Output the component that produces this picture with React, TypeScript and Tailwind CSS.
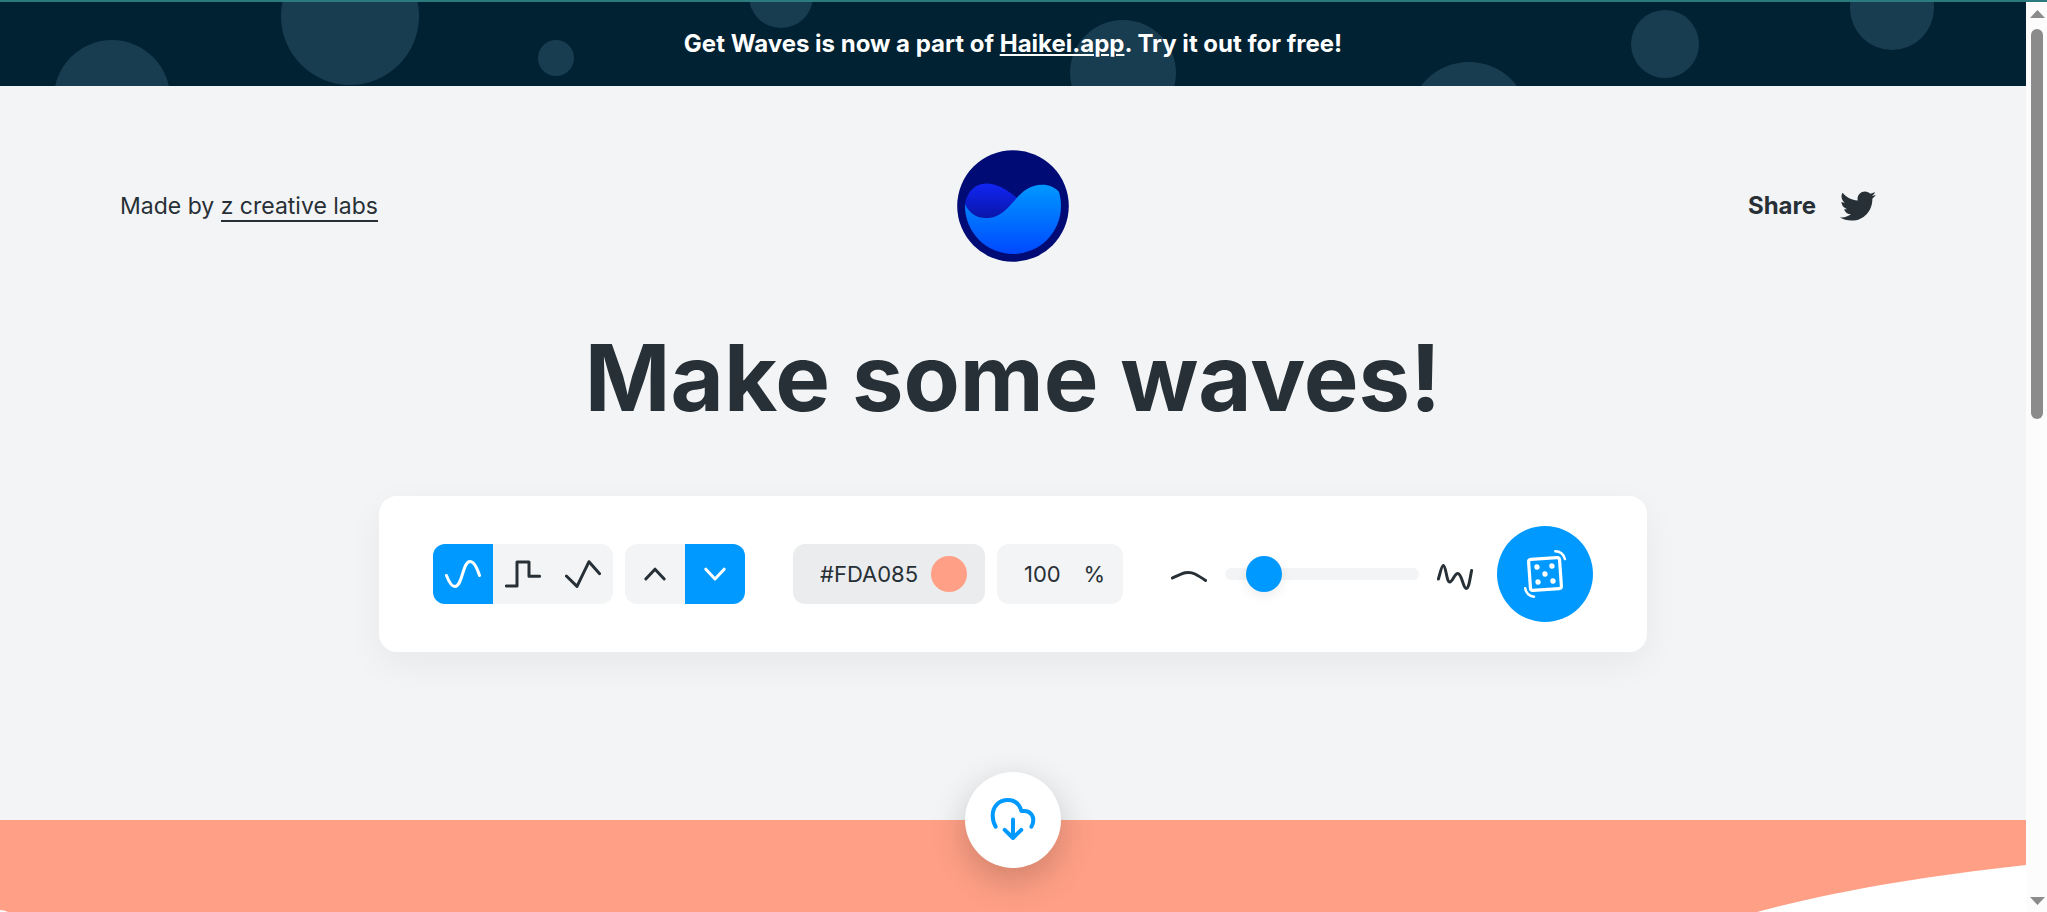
import { useState } from "react";
import type { ReactNode } from "react";
import { FaTwitter } from "react-icons/fa";

type WaveShape = "sine" | "step" | "peak";
type Direction = "up" | "down";

const bubbles = [
  { cx: 112, cy: 98, r: 58 },
  { cx: 350, cy: 16, r: 69 },
  { cx: 556, cy: 58, r: 18 },
  { cx: 781, cy: -4, r: 32 },
  { cx: 1123, cy: 73, r: 53 },
  { cx: 1469, cy: 122, r: 60 },
  { cx: 1665, cy: 44, r: 34 },
  { cx: 1892, cy: 8, r: 42 },
];

const shapes: { id: WaveShape; label: string; path: string }[] = [
  {
    id: "sine",
    label: "Smooth wave",
    path: "M1.5 19.5C4.5 27.5 7 30.5 10 30.5C17.5 30.5 17.5 5.5 25 5.5C28.5 5.5 31.5 10 34.5 19.5",
  },
  { id: "step", label: "Stepped wave", path: "M1.4 30H12V6H24V20.3H34.6" },
  { id: "peak", label: "Peaked wave", path: "M1.4 20L12 30.4L24 5.7L34.6 17.7" },
];

const directions: { id: Direction; label: string; path: string }[] = [
  { id: "up", label: "Wave on top", path: "M8.8 23L18 13.2L27.2 23" },
  { id: "down", label: "Wave at bottom", path: "M8.8 13.2L18 23L27.2 13.2" },
];

function StrokeIcon({ path }: { path: string }) {
  return (
    <svg
      viewBox="0 0 36 36"
      className="h-9 w-9 shrink-0"
      fill="none"
      stroke="currentColor"
      strokeWidth="3"
      strokeLinecap="round"
      strokeLinejoin="round"
      aria-hidden="true"
    >
      <path d={path} />
    </svg>
  );
}

function ToggleButton({
  active,
  label,
  onClick,
  children,
}: {
  active: boolean;
  label: string;
  onClick: () => void;
  children: ReactNode;
}) {
  return (
    <button
      type="button"
      aria-label={label}
      aria-pressed={active}
      onClick={onClick}
      className={
        active
          ? "flex h-15 w-15 items-center justify-center bg-[#0099ff] text-white"
          : "flex h-15 w-15 items-center justify-center bg-[#f3f4f5] text-[#273036]"
      }
    >
      {children}
    </button>
  );
}

function Banner() {
  return (
    <div className="relative flex h-[84px] items-center justify-center overflow-hidden bg-[#002233]">
      <svg
        viewBox="0 2 2026 84"
        preserveAspectRatio="xMidYMid slice"
        className="absolute inset-0 h-full w-full"
        fill="#193d50"
        aria-hidden="true"
      >
        {bubbles.map((b) => (
          <circle key={b.cx} cx={b.cx} cy={b.cy} r={b.r} />
        ))}
      </svg>
      <p className="relative text-2xl font-bold text-white">
        Get Waves is now a part of{" "}
        <a href="#haikei" className="underline decoration-2 underline-offset-2">
          Haikei.app
        </a>
        . Try it out for free!
      </p>
    </div>
  );
}

function Logo() {
  return (
    <svg viewBox="0 0 112 112" className="h-28 w-28" role="img" aria-label="Get Waves">
      <defs>
        <linearGradient id="back-wave" x1="0" y1="33" x2="0" y2="68" gradientUnits="userSpaceOnUse">
          <stop stopColor="#1126f5" />
          <stop offset="1" stopColor="#0915a8" />
        </linearGradient>
        <linearGradient id="front-wave" x1="0" y1="34" x2="0" y2="104" gradientUnits="userSpaceOnUse">
          <stop stopColor="#0099ff" />
          <stop offset="1" stopColor="#0048ff" />
        </linearGradient>
      </defs>
      <circle cx="56" cy="56" r="55.8" fill="#000b76" />
      <path
        d="M7.8 54C10 42 18 33.4 29.3 33.4C41 33.4 51 40.5 60.5 48.3L56 68H29.3C18 68 12 62 7.8 54Z"
        fill="url(#back-wave)"
      />
      <path
        d="M7.8 54C12 62 18 68 29.3 68C55 68 58 34.8 85.3 34.8C92 34.8 98.5 37.5 102 42C103.3 46.5 104 51 104 56A48 48 0 0 1 8 56Z"
        fill="url(#front-wave)"
      />
    </svg>
  );
}

function Header() {
  return (
    <header className="grid grid-cols-[1fr_auto_1fr] items-center pt-16 pr-[150px] pl-[120px]">
      <p className="text-[23px]">
        Made by{" "}
        <a href="#labs" className="border-b-2 border-[#273036]">
          z creative labs
        </a>
      </p>
      <a href="#home" className="ml-[30px]">
        <Logo />
      </a>
      <div className="flex items-center justify-end gap-6">
        <span className="text-2xl font-bold">Share</span>
        <a href="#twitter" aria-label="Share on Twitter">
          <FaTwitter className="h-9 w-9" />
        </a>
      </div>
    </header>
  );
}

function Toolbar() {
  const [shape, setShape] = useState<WaveShape>("sine");
  const [direction, setDirection] = useState<Direction>("down");
  const [color, setColor] = useState("#FDA085");
  const [opacity, setOpacity] = useState("100");
  const [complexity, setComplexity] = useState(2);

  return (
    <div className="mx-auto mt-[58px] flex w-fit items-center rounded-[18px] bg-white px-[54px] py-[30px] shadow-[0_12px_36px_rgba(0,0,0,0.05)]">
      <div className="flex overflow-hidden rounded-xl">
        {shapes.map((s) => (
          <ToggleButton key={s.id} label={s.label} active={shape === s.id} onClick={() => setShape(s.id)}>
            <StrokeIcon path={s.path} />
          </ToggleButton>
        ))}
      </div>

      <div className="ml-3 flex overflow-hidden rounded-xl">
        {directions.map((d) => (
          <ToggleButton key={d.id} label={d.label} active={direction === d.id} onClick={() => setDirection(d.id)}>
            <StrokeIcon path={d.path} />
          </ToggleButton>
        ))}
      </div>

      <label className="ml-12 flex h-15 w-48 items-center justify-between rounded-xl bg-[#ebecee] pr-[18px] pl-[27px]">
        <input
          type="text"
          aria-label="Wave color"
          value={color}
          onChange={(e) => setColor(e.target.value)}
          className="w-[108px] bg-transparent text-[22px] outline-none"
        />
        <span className="h-9 w-9 shrink-0 rounded-full bg-[#ffa086]" />
      </label>

      <label className="ml-3 flex h-15 w-[126px] items-center justify-between rounded-xl bg-[#f3f4f5] pr-[18px] pl-[27px] text-[22px]">
        <input
          type="text"
          aria-label="Opacity"
          value={opacity}
          onChange={(e) => setOpacity(e.target.value)}
          className="w-12 bg-transparent outline-none"
        />
        <span>%</span>
      </label>

      <div className="ml-12 flex items-center gap-[18px]">
        <StrokeIcon path="M1.4 22C12 17 17 14.5 24 18C28 20 31 22 34.6 24.4" />
        <input
          type="range"
          aria-label="Complexity"
          min={0}
          max={15}
          value={complexity}
          onChange={(e) => setComplexity(Number(e.target.value))}
          className="h-3 w-[194px] appearance-none rounded-full bg-[#f3f4f5] outline-none [&::-webkit-slider-thumb]:h-9 [&::-webkit-slider-thumb]:w-9 [&::-webkit-slider-thumb]:appearance-none [&::-webkit-slider-thumb]:rounded-full [&::-webkit-slider-thumb]:bg-[#0099ff] [&::-webkit-slider-thumb]:shadow-[0_4px_12px_rgba(0,0,0,0.08)]"
        />
        <StrokeIcon path="M1.4 23C3 18 4.5 9.5 6.3 9.5C9 9.5 9.5 26 12.7 26C15.5 26 17.5 17.5 20.7 17.5C25 17.5 26 32.4 29.3 32.4C32 32.4 33 22 34.6 14.5" />
      </div>

      <button
        type="button"
        aria-label="Randomize"
        className="ml-6 flex h-24 w-24 items-center justify-center rounded-full bg-[#0099ff] text-white"
      >
        <svg
          viewBox="-24 -24 48 48"
          className="h-12 w-12"
          fill="none"
          stroke="currentColor"
          strokeLinecap="round"
          aria-hidden="true"
        >
          <g transform="rotate(-4)">
            <rect x="-15.5" y="-15.5" width="31" height="31" rx="2.5" strokeWidth="3.2" />
            <g fill="currentColor" stroke="none">
              <circle cx="-7.5" cy="-7.5" r="2.7" />
              <circle cx="7.5" cy="-7.5" r="2.7" />
              <circle r="2.7" />
              <circle cx="-7.5" cy="7.5" r="2.7" />
              <circle cx="7.5" cy="7.5" r="2.7" />
            </g>
          </g>
          <path
            d="M10.3 -22.7C15 -22.7 18.5 -20 19.9 -15M-19.8 14.2C-19 19 -15.5 22.2 -11 22.7"
            strokeWidth="2.5"
          />
        </svg>
      </button>
    </div>
  );
}

function WavePreview() {
  return (
    <section className="relative mt-[168px] min-h-0 flex-1 bg-white">
      <svg viewBox="0 0 2026 92" preserveAspectRatio="none" className="h-full w-full" fill="#ffa086" aria-hidden="true">
        <path d="M0 0H2026V45C1925 56 1835 71 1757 92H8Q4 90 0 90Z" />
      </svg>
      <button
        type="button"
        aria-label="Download wave"
        className="absolute -top-12 left-1/2 flex h-24 w-24 -translate-x-1/2 items-center justify-center rounded-full bg-white text-[#0099ff] shadow-[0_12px_36px_rgba(0,0,0,0.2)]"
      >
        <svg
          viewBox="-24 -24 48 48"
          className="h-12 w-12"
          fill="none"
          stroke="currentColor"
          strokeWidth="4"
          strokeLinecap="round"
          strokeLinejoin="round"
          aria-hidden="true"
        >
          <path d="M-17.3 6.7C-19.5 3 -20.3 0 -20.3 -4.5C-20.3 -13.5 -14 -20 -5.3 -20C1.5 -20 6.5 -16 8.4 -8.9H11.5C16.5 -8.9 20.3 -5 20.3 0C20.3 2.5 19.8 4.5 18.4 6.7" />
          <path d="M0 -0.5V18M-8.3 9.8L0 18L8.3 9.8" />
        </svg>
      </button>
    </section>
  );
}

function ScrollRail() {
  return (
    <div
      className="flex w-[21px] shrink-0 flex-col items-center bg-[#fcfcfc] pt-2 pb-[7px] pl-px text-[#8b8b8b]"
      aria-hidden="true"
    >
      <svg viewBox="0 0 15 8" className="h-2 w-[15px]" fill="currentColor">
        <path d="M7.5 0L15 8H0Z" />
      </svg>
      <div className="mt-[11px] h-[390px] w-3 rounded-full bg-[#8b8b8b]" />
      <svg viewBox="0 0 15 8" className="mt-auto h-2 w-[15px]" fill="currentColor">
        <path d="M0 0H15L7.5 8Z" />
      </svg>
    </div>
  );
}

export default function App() {
  return (
    <div className="flex h-screen flex-col overflow-hidden border-t-2 border-[#2a7a7e] bg-[#f3f4f5] font-['Inter','Liberation_Sans',sans-serif] text-[#273036]">
      <div className="flex min-h-0 flex-1">
        <main className="flex min-w-0 flex-1 flex-col">
          <Banner />
          <Header />
          <h1 className="mt-14 text-center text-[92px] leading-[120px] font-bold">Make some waves!</h1>
          <Toolbar />
          <WavePreview />
        </main>
        <ScrollRail />
      </div>
    </div>
  );
}
